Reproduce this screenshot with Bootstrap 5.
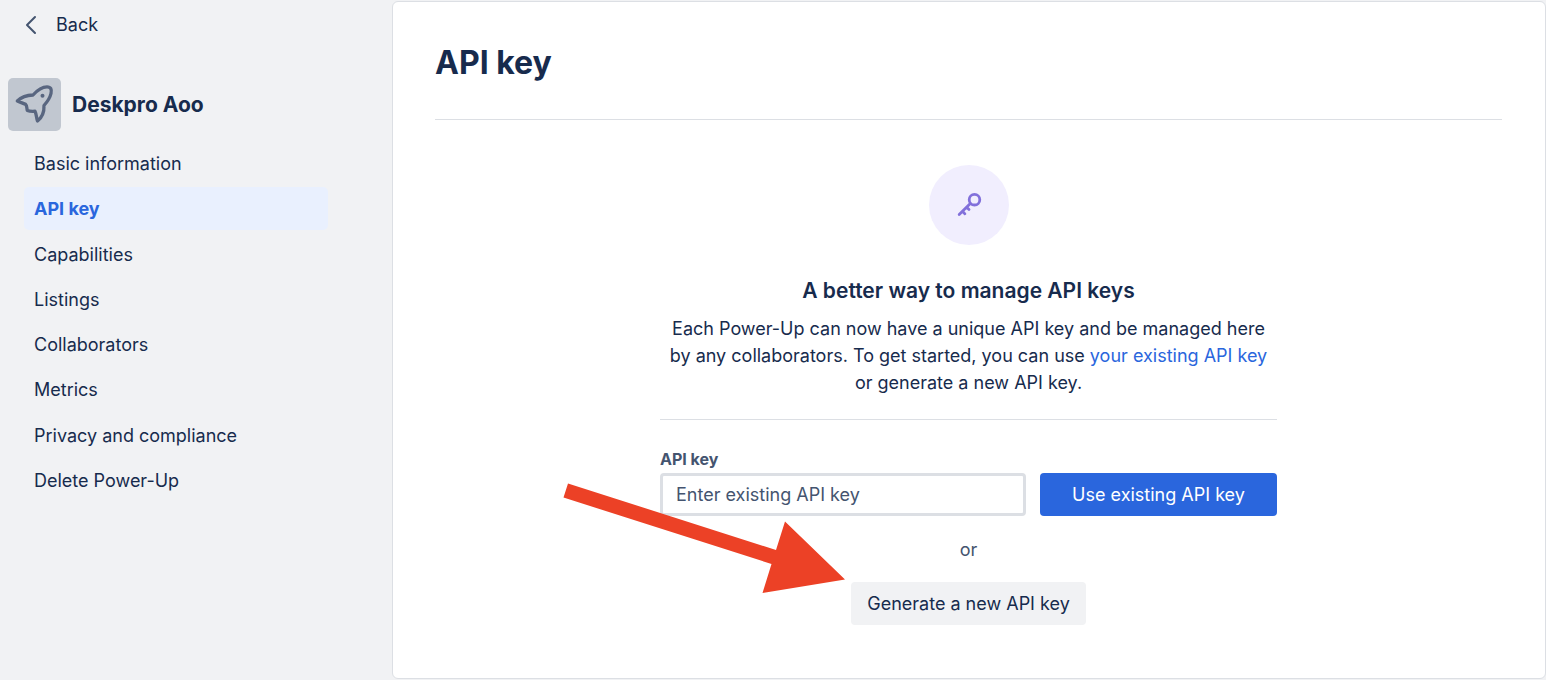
<!DOCTYPE html>
<html lang="en">
<head>
<meta charset="utf-8">
<meta name="viewport" content="width=device-width, initial-scale=1">
<title>API key</title>
<link href="https://cdn.jsdelivr.net/npm/bootstrap@5.3.0/dist/css/bootstrap.min.css" rel="stylesheet">
<style>
  body { font-family: Inter, "Liberation Sans", sans-serif; font-size: 18px; line-height: 27px; color: #172b4d; background: #f1f2f4; }
  a { text-decoration: none; }
  .sidebar { width: 392px; padding: 0 64px 0 8px; }
  .back-link { color: #172b4d; padding: 11px 16px; gap: 18px; }
  .app-head { margin-top: 29px; gap: 11px; }
  .app-icon { width: 53px; height: 53px; border-radius: 5px; background: #c1c7d0; }
  .app-name { font-size: 21px; font-weight: 700; line-height: 28px; }
  .side-nav { margin: 11px 0 0 16px; min-height: 360px; }
  .side-nav .nav-link { color: #172b4d; padding: 8px 10px; border-radius: 5px; }
  .side-nav .nav-link.active { color: #2a66dd; background: #e9f0fe; font-weight: 700; }
  .panel { background: #fff; border: 1px solid #dcdfe4; border-radius: 6px; margin: 1px 0; padding: 41px 43px 48px 42px; }
  .page-title { font-size: 32px; line-height: 40px; font-weight: 700; }
  .rule { border-top: 1px solid #dcdfe4; }
  .title-rule { margin-top: 36px; }
  .content { max-width: 617px; padding-top: 45px; }
  .key-badge { width: 80px; height: 80px; background: #f1eefe; }
  .sub-title { font-size: 21px; line-height: 28px; font-weight: 600; margin: 32px 0 10px; }
  .intro { margin-bottom: 23px; }
  .intro a { color: #2a66dd; }
  .key-form { padding-top: 27px; }
  .key-label { font-size: 16px; line-height: 24px; font-weight: 700; color: #44546f; margin-bottom: 2px; }
  .key-row { gap: 14px; }
  .key-input { height: 43px; border: 3px solid #dcdfe4; border-radius: 4px; padding: 0 13px; font-size: 18px; color: #44546f; }
  .key-input::placeholder { color: #44546f; }
  .btn-key { height: 43px; border: 0; border-radius: 4px; font-size: 18px; line-height: 27px; padding: 8px 16px; }
  .btn-use, .btn-use:hover { width: 237px; color: #fff; background: #2a66dd; }
  .btn-new, .btn-new:hover { width: 235px; color: #172b4d; background: #f1f2f4; }
  .or-text { color: #44546f; margin: 20px 0 19px; }
  .pointer { position: absolute; left: -100px; top: 60px; pointer-events: none; }
</style>
</head>
<body>
<div class="d-flex min-vh-100">
  <aside class="sidebar flex-shrink-0">
    <a href="#" class="back-link d-flex align-items-center">
      <svg width="14" height="20" viewBox="0 0 14 20" fill="none" stroke="#44546f" stroke-width="2" stroke-linecap="round" stroke-linejoin="round" aria-hidden="true"><path d="M11 2 3 10l8 8"/></svg>
      Back
    </a>
    <div class="app-head d-flex align-items-center">
      <div class="app-icon flex-shrink-0">
        <svg class="d-block" width="53" height="53" viewBox="0 0 53 53" fill="none" stroke="#596680" stroke-width="3.3" stroke-linejoin="round" stroke-linecap="round" aria-hidden="true">
          <path d="M9.300 23C13 19.500 18 17.300 25 17C29 12.500 34 8.800 39 8.800C42.800 8.800 44 11.500 43 15.500C42 20 39.500 23.500 36 27.500C36.300 34 34.500 39 29.500 43C28.300 40 28.600 36.500 27 33.200C24 33.400 21.500 33.300 19.300 32.500C18.600 30.500 19.300 28 17.500 26.300C15 25 12 24.300 9.300 23Z"/>
          <circle cx="34.500" cy="17.700" r="2" fill="#596680" stroke="none"/>
        </svg>
      </div>
      <div class="app-name">Deskpro Aoo</div>
    </div>
    <nav class="side-nav nav flex-column flex-nowrap justify-content-between" aria-label="Power-Up settings">
      <a class="nav-link" href="#">Basic information</a>
      <a class="nav-link active" aria-current="page" href="#">API key</a>
      <a class="nav-link" href="#">Capabilities</a>
      <a class="nav-link" href="#">Listings</a>
      <a class="nav-link" href="#">Collaborators</a>
      <a class="nav-link" href="#">Metrics</a>
      <a class="nav-link" href="#">Privacy and compliance</a>
      <a class="nav-link" href="#">Delete Power-Up</a>
    </nav>
  </aside>
  <main class="panel flex-grow-1">
    <h1 class="page-title mb-0">API key</h1>
    <div class="rule title-rule"></div>
    <section class="content mx-auto text-center">
      <div class="key-badge rounded-circle mx-auto d-flex align-items-center justify-content-center">
        <svg width="28" height="28" viewBox="0 0 28 28" fill="none" stroke="#8270db" stroke-width="2.800" stroke-linecap="round" stroke-linejoin="round" aria-hidden="true">
          <circle cx="19.500" cy="8.700" r="5.300"/>
          <path d="M15.300 12.600 4.200 23.600M11.700 16.300l2.300 2.300M7.700 20.300l2.200 2.500"/>
        </svg>
      </div>
      <h2 class="sub-title">A better way to manage API keys</h2>
      <p class="intro">Each Power-Up can now have a unique API key and be managed here by any collaborators. To get started, you can use <a href="#">your existing API key</a> or generate a new API key.</p>
      <div class="rule"></div>
      <form class="key-form position-relative">
        <label for="key" class="key-label d-block text-start">API key</label>
        <div class="key-row d-flex">
          <input id="key" type="text" class="key-input form-control" placeholder="Enter existing API key">
          <button type="button" class="btn btn-key btn-use flex-shrink-0">Use existing API key</button>
        </div>
        <div class="or-text">or</div>
        <button type="button" class="btn btn-key btn-new">Generate a new API key</button>
        <svg class="pointer" width="290" height="120" viewBox="0 0 290 120" aria-hidden="true"><path d="M8 3.500 216 70 225 41.500 285 99.500 202.500 113 211.500 84 3.500 17.500Z" fill="#ec4126"/></svg>
      </form>
    </section>
  </main>
</div>
<script src="https://cdn.jsdelivr.net/npm/bootstrap@5.3.0/dist/js/bootstrap.bundle.min.js"></script>
</body>
</html>
